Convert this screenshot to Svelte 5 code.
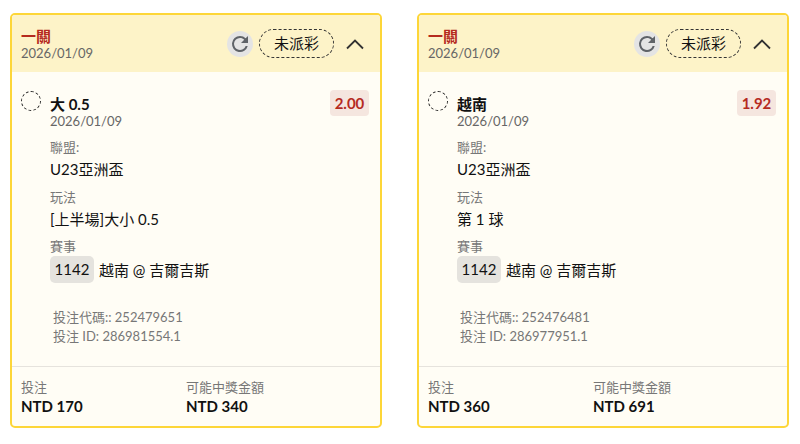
<script>
  const bets = [
    { pick: '大 0.5', odds: '2.00', market: '[上半場]大小 0.5', code: '252479651', id: '286981554.1', stake: 'NTD 170', win: 'NTD 340' },
    { pick: '越南', odds: '1.92', market: '第 1 球', code: '252476481', id: '286977951.1', stake: 'NTD 360', win: 'NTD 691' }
  ];
</script>

<div class="page">
  {#each bets as bet}
    <section class="card">
      <header class="head">
        <div class="head-text">
          <div class="type">一關</div>
          <div class="date">2026/01/09</div>
        </div>
        <button class="refresh" aria-label="refresh">
          <svg width="24" height="24" viewBox="0 0 24 24" fill="#5f6368"><path d="M17.65 6.35A7.95 7.95 0 0 0 12 4a8 8 0 1 0 7.73 10h-2.08A6 6 0 1 1 12 6c1.66 0 3.14.69 4.22 1.78L13 11h7V4l-2.35 2.35z"/></svg>
        </button>
        <div class="status">未派彩</div>
        <svg class="chevron" width="20" height="12" viewBox="0 0 20 12" fill="none" stroke="#333" stroke-width="1.8"><path d="M2 10.5 10 2.5l8 8"/></svg>
      </header>

      <div class="body">
        <div class="pick-row">
          <span class="radio"></span>
          <div class="pick">
            <div class="pick-name">{bet.pick}</div>
            <div class="date">2026/01/09</div>
          </div>
          <span class="odds">{bet.odds}</span>
        </div>
        <div class="fields">
          <div class="label">聯盟:</div>
          <div class="value">U23亞洲盃</div>
          <div class="label">玩法</div>
          <div class="value">{bet.market}</div>
          <div class="label">賽事</div>
          <div class="match"><span class="num">1142</span>越南 @ 吉爾吉斯</div>
        </div>
        <div class="codes">
          <div>投注代碼:: {bet.code}</div>
          <div>投注 ID: {bet.id}</div>
        </div>
      </div>

      <footer class="foot">
        <div class="cell">
          <div class="foot-label">投注</div>
          <div class="foot-value">{bet.stake}</div>
        </div>
        <div class="cell">
          <div class="foot-label">可能中獎金額</div>
          <div class="foot-value">{bet.win}</div>
        </div>
      </footer>
    </section>
  {/each}
</div>

<style>
  :global(body) {
    background: #fff;
    font-family: Lato, "Noto Sans CJK TC", sans-serif;
  }

  .page {
    display: flex;
    gap: 35px;
    padding: 13px 10px 0;
    align-items: flex-start;
  }

  .card {
    box-sizing: border-box;
    width: 372px;
    height: 415px;
    display: flex;
    flex-direction: column;
    border: 2px solid #fdd638;
    border-radius: 5px;
    background: #fffdf5;
    overflow: hidden;
  }

  .head {
    height: 57px;
    flex: none;
    display: flex;
    align-items: center;
    padding: 0 15px 0 9px;
    background: #fdf3c8;
  }

  .head-text {
    flex: 1;
  }

  .type {
    font-size: 15px;
    line-height: 18px;
    font-weight: 700;
    color: #b52b1f;
  }

  .date {
    font-size: 13px;
    line-height: 16px;
    color: #666;
  }

  .refresh {
    width: 26px;
    height: 26px;
    padding: 0;
    border: 0;
    border-radius: 50%;
    background: #e4e4e4;
    display: flex;
    align-items: center;
    justify-content: center;
    margin-right: 6px;
  }

  .status {
    box-sizing: border-box;
    width: 75px;
    height: 29px;
    border: 1px dashed #333;
    border-radius: 15px;
    font-size: 15px;
    line-height: 27px;
    text-align: center;
    color: #111;
    margin-right: 11px;
  }

  .chevron {
    display: block;
  }

  .body {
    flex: 1;
    padding: 18px 11px 0 9px;
  }

  .pick-row {
    display: flex;
    align-items: flex-start;
  }

  .radio {
    box-sizing: border-box;
    width: 20px;
    height: 20px;
    margin-top: 1px;
    border: 1px dashed #222;
    border-radius: 50%;
    flex: none;
  }

  .pick {
    flex: 1;
    margin-left: 9px;
    padding-top: 5px;
  }

  .pick-name {
    font-size: 15px;
    line-height: 18px;
    font-weight: 700;
    color: #111;
  }

  .odds {
    box-sizing: border-box;
    width: 39px;
    height: 26px;
    border-radius: 4px;
    background: #f5e6df;
    color: #b52b1f;
    font-size: 15px;
    line-height: 26px;
    font-weight: 700;
    text-align: center;
  }

  .fields {
    margin: 8px 0 0 29px;
  }

  .label {
    font-size: 13px;
    line-height: 20px;
    color: #777;
  }

  .value {
    font-size: 15px;
    line-height: 24px;
    color: #111;
    margin-bottom: 5.5px;
  }

  .match {
    display: flex;
    align-items: center;
    font-size: 15px;
    color: #111;
  }

  .num {
    width: 44px;
    height: 27px;
    border-radius: 5px;
    background: #e5e3de;
    line-height: 27px;
    text-align: center;
    margin-right: 5px;
  }

  .codes {
    margin: 25px 0 0 32px;
    font-size: 13px;
    line-height: 19px;
    color: #777;
  }

  .foot {
    height: 60px;
    flex: none;
    box-sizing: border-box;
    display: flex;
    padding: 11px 10px 0 9px;
    border-top: 1px solid #e6e3dd;
  }

  .cell {
    width: 165px;
  }

  .foot-label {
    font-size: 13px;
    line-height: 18px;
    color: #777;
  }

  .foot-value {
    font-size: 15px;
    line-height: 20px;
    font-weight: 700;
    color: #111;
  }
</style>
